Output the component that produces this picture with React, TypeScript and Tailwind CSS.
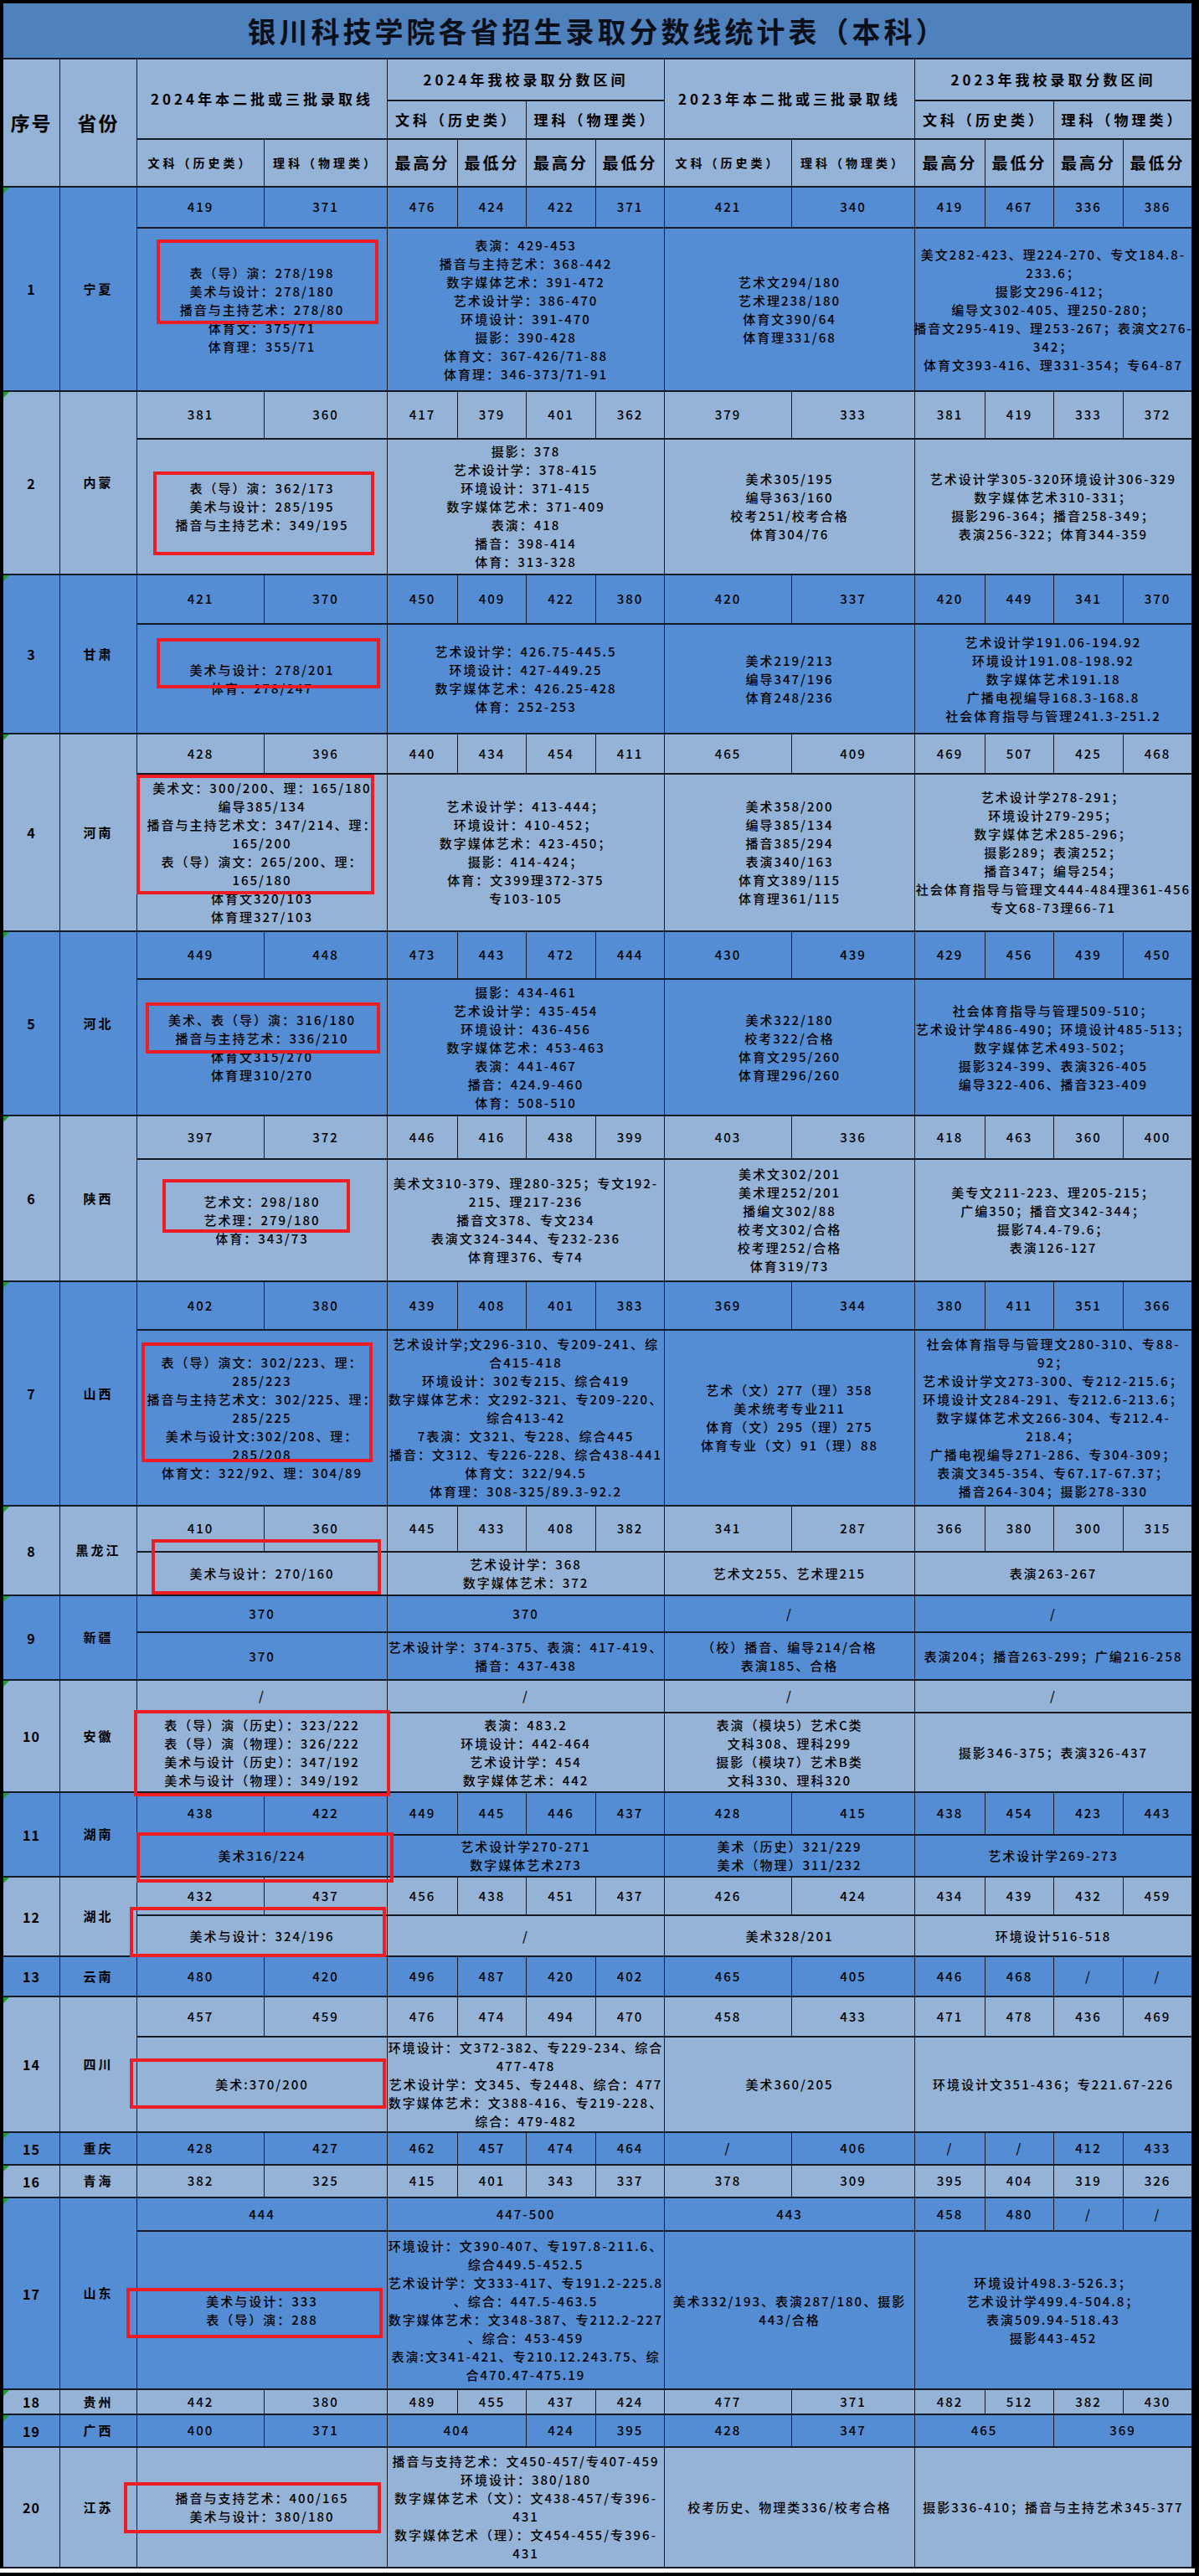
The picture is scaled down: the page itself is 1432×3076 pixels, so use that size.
import React from "react";

const COLS =
  "grid grid-cols-[67px_91px_151px_146px_83px_81px_82px_81px_151px_146px_83px_81px_82px_81px] gap-x-px gap-y-[2px]";

type Sc = string | [string, number];

interface Row {
  no: string;
  prov: string;
  dark: boolean;
  cls: string;
  scores?: Sc[];
  texts?: string[][];
  tri?: boolean;
}

const SPAN: Record<number, string> = { 1: "", 2: "col-span-2", 4: "col-span-4" };
const TSPAN = ["col-span-2", "col-span-4", "col-span-2", "col-span-4"];

const ROWS: Row[] = [
  {
    no: "1", prov: "宁夏", dark: true, tri: true, cls: "h-[242px] grid-rows-[47px_193px]",
    scores: ["419", "371", "476", "424", "422", "371", "421", "340", "419", "467", "336", "386"],
    texts: [
      ["表（导）演：278/198", "美术与设计：278/180", "播音与主持艺术：278/80", "体育文：375/71", "体育理：355/71"],
      ["表演：429-453", "播音与主持艺术：368-442", "数字媒体艺术：391-472", "艺术设计学：386-470", "环境设计：391-470", "摄影：390-428", "体育文：367-426/71-88", "体育理：346-373/71-91"],
      ["艺术文294/180", "艺术理238/180", "体育文390/64", "体育理331/68"],
      ["美文282-423、理224-270、专文184.8-", "233.6；", "摄影文296-412；", "编导文302-405、理250-280；", "播音文295-419、理253-267；表演文276-", "342；", "体育文393-416、理331-354；专64-87"],
    ],
  },
  {
    no: "2", prov: "内蒙", dark: false, tri: true, cls: "h-[217px] grid-rows-[55px_160px]",
    scores: ["381", "360", "417", "379", "401", "362", "379", "333", "381", "419", "333", "372"],
    texts: [
      ["表（导）演：362/173", "美术与设计：285/195", "播音与主持艺术：349/195"],
      ["摄影：378", "艺术设计学：378-415", "环境设计：371-415", "数字媒体艺术：371-409", "表演：418", "播音：398-414", "体育：313-328"],
      ["美术305/195", "编导363/160", "校考251/校考合格", "体育304/76"],
      ["艺术设计学305-320环境设计306-329", "数字媒体艺术310-331；", "摄影296-364；播音258-349；", "表演256-322；体育344-359"],
    ],
  },
  {
    no: "3", prov: "甘肃", dark: true, tri: true, cls: "h-[188px] grid-rows-[57px_129px]",
    scores: ["421", "370", "450", "409", "422", "380", "420", "337", "420", "449", "341", "370"],
    texts: [
      ["美术与设计：278/201", "体育：278/247"],
      ["艺术设计学：426.75-445.5", "环境设计：427-449.25", "数字媒体艺术：426.25-428", "体育：252-253"],
      ["美术219/213", "编导347/196", "体育248/236"],
      ["艺术设计学191.06-194.92", "环境设计191.08-198.92", "数字媒体艺术191.18", "广播电视编导168.3-168.8", "社会体育指导与管理241.3-251.2"],
    ],
  },
  {
    no: "4", prov: "河南", dark: false, tri: true, cls: "h-[234px] grid-rows-[46px_186px]",
    scores: ["428", "396", "440", "434", "454", "411", "465", "409", "469", "507", "425", "468"],
    texts: [
      ["美术文：300/200、理：165/180", "编导385/134", "播音与主持艺术文：347/214、理：", "165/200", "表（导）演文：265/200、理：", "165/180", "体育文320/103", "体育理327/103"],
      ["艺术设计学：413-444；", "环境设计：410-452；", "数字媒体艺术：423-450；", "摄影：414-424；", "体育：文399理372-375", "专103-105"],
      ["美术358/200", "编导385/134", "播音385/294", "表演340/163", "体育文389/115", "体育理361/115"],
      ["艺术设计学278-291；", "环境设计279-295；", "数字媒体艺术285-296；", "摄影289；表演252；", "播音347；编导254；", "社会体育指导与管理文444-484理361-456", "专文68-73理66-71"],
    ],
  },
  {
    no: "5", prov: "河北", dark: true, tri: true, cls: "h-[218px] grid-rows-[55px_161px]",
    scores: ["449", "448", "473", "443", "472", "444", "430", "439", "429", "456", "439", "450"],
    texts: [
      ["美术、表（导）演：316/180", "播音与主持艺术：336/210", "体育文315/270", "体育理310/270"],
      ["摄影：434-461", "艺术设计学：435-454", "环境设计：436-456", "数字媒体艺术：453-463", "表演：441-467", "播音：424.9-460", "体育：508-510"],
      ["美术322/180", "校考322/合格", "体育文295/260", "体育理296/260"],
      ["社会体育指导与管理509-510；", "艺术设计学486-490；环境设计485-513；", "数字媒体艺术493-502；", "摄影324-399、表演326-405", "编导322-406、播音323-409"],
    ],
  },
  {
    no: "6", prov: "陕西", dark: false, tri: true, cls: "h-[196px] grid-rows-[50px_144px]",
    scores: ["397", "372", "446", "416", "438", "399", "403", "336", "418", "463", "360", "400"],
    texts: [
      ["艺术文：298/180", "艺术理：279/180", "体育：343/73"],
      ["美术文310-379、理280-325；专文192-", "215、理217-236", "播音文378、专文234", "表演文324-344、专232-236", "体育理376、专74"],
      ["美术文302/201", "美术理252/201", "播编文302/88", "校考文302/合格", "校考理252/合格", "体育319/73"],
      ["美专文211-223、理205-215；", "广编350；播音文342-344；", "摄影74.4-79.6；", "表演126-127"],
    ],
  },
  {
    no: "7", prov: "山西", dark: true, tri: true, cls: "h-[266px] grid-rows-[56px_208px]",
    scores: ["402", "380", "439", "408", "401", "383", "369", "344", "380", "411", "351", "366"],
    texts: [
      ["表（导）演文：302/223、理：", "285/223", "播音与主持艺术文：302/225、理：", "285/225", "美术与设计文:302/208、理：", "285/208", "体育文：322/92、理：304/89"],
      ["艺术设计学;文296-310、专209-241、综", "合415-418", "环境设计：302专215、综合419", "数字媒体艺术：文292-321、专209-220、", "综合413-42", "7表演：文321、专228、综合445", "播音：文312、专226-228、综合438-441", "体育文：322/94.5", "体育理：308-325/89.3-92.2"],
      ["艺术（文）277（理）358", "美术统考专业211", "体育（文）295（理）275", "体育专业（文）91（理）88"],
      ["社会体育指导与管理文280-310、专88-", "92；", "艺术设计学文273-300、专212-215.6；", "环境设计文284-291、专212.6-213.6；", "数字媒体艺术文266-304、专212.4-", "218.4；", "广播电视编导271-286、专304-309；", "表演文345-354、专67.17-67.37；", "播音264-304；摄影278-330"],
    ],
  },
  {
    no: "8", prov: "黑龙江", dark: false, tri: true, cls: "h-[105px] grid-rows-[53px_50px]",
    scores: ["410", "360", "445", "433", "408", "382", "341", "287", "366", "380", "300", "315"],
    texts: [["美术与设计：270/160"], ["艺术设计学：368", "数字媒体艺术：372"], ["艺术文255、艺术理215"], ["表演263-267"]],
  },
  {
    no: "9", prov: "新疆", dark: true, tri: true, cls: "h-[99px] grid-rows-[42px_55px]",
    scores: [["370", 2], ["370", 4], ["/", 2], ["/", 4]],
    texts: [
      ["370"],
      ["艺术设计学：374-375、表演：417-419、", "播音：437-438"],
      ["（校）播音、编导214/合格", "表演185、合格"],
      ["表演204；播音263-299；广编216-258"],
    ],
  },
  {
    no: "10", prov: "安徽", dark: false, tri: true, cls: "h-[132px] grid-rows-[37px_93px]",
    scores: [["/", 2], ["/", 4], ["/", 2], ["/", 4]],
    texts: [
      ["表（导）演（历史）：323/222", "表（导）演（物理）：326/222", "美术与设计（历史）：347/192", "美术与设计（物理）：349/192"],
      ["表演：483.2", "环境设计：442-464", "艺术设计学：454", "数字媒体艺术：442"],
      ["表演（模块5）艺术C类", "文科308、理科299", "摄影（模块7）艺术B类", "文科330、理科320"],
      ["摄影346-375；表演326-437"],
    ],
  },
  {
    no: "11", prov: "湖南", dark: true, tri: true, cls: "h-[99px] grid-rows-[49px_48px]",
    scores: ["438", "422", "449", "445", "446", "437", "428", "415", "438", "454", "423", "443"],
    texts: [["美术316/224"], ["艺术设计学270-271", "数字媒体艺术273"], ["美术（历史）321/229", "美术（物理）311/232"], ["艺术设计学269-273"]],
  },
  {
    no: "12", prov: "湖北", dark: false, tri: true, cls: "h-[93px] grid-rows-[44px_47px]",
    scores: ["432", "437", "456", "438", "451", "437", "426", "424", "434", "439", "432", "459"],
    texts: [["美术与设计：324/196"], ["/"], ["美术328/201"], ["环境设计516-518"]],
  },
  {
    no: "13", prov: "云南", dark: true, cls: "h-[46px] grid-rows-[46px]",
    scores: ["480", "420", "496", "487", "420", "402", "465", "405", "446", "468", "/", "/"],
  },
  {
    no: "14", prov: "四川", dark: false, tri: true, cls: "h-[160px] grid-rows-[46px_112px]",
    scores: ["457", "459", "476", "474", "494", "470", "458", "433", "471", "478", "436", "469"],
    texts: [
      ["美术:370/200"],
      ["环境设计：文372-382、专229-234、综合", "477-478", "艺术设计学：文345、专2448、综合：477", "数字媒体艺术：文388-416、专219-228、", "综合：479-482"],
      ["美术360/205"],
      ["环境设计文351-436；专221.67-226"],
    ],
  },
  {
    no: "15", prov: "重庆", dark: true, tri: true, cls: "h-[37px] grid-rows-[37px]",
    scores: ["428", "427", "462", "457", "474", "464", "/", "406", "/", "/", "412", "433"],
  },
  {
    no: "16", prov: "青海", dark: false, tri: true, cls: "h-[37px] grid-rows-[37px]",
    scores: ["382", "325", "415", "401", "343", "337", "378", "309", "395", "404", "319", "326"],
  },
  {
    no: "17", prov: "山东", dark: true, tri: true, cls: "h-[227px] grid-rows-[38px_187px]",
    scores: [["444", 2], ["447-500", 4], ["443", 2], "458", "480", "/", "/"],
    texts: [
      ["美术与设计：333", "表（导）演：288"],
      ["环境设计：文390-407、专197.8-211.6、", "综合449.5-452.5", "艺术设计学：文333-417、专191.2-225.8", "、综合：447.5-463.5", "数字媒体艺术：文348-387、专212.2-227", "、综合：453-459", "表演:文341-421、专210.12.243.75、综", "合470.47-475.19"],
      ["美术332/193、表演287/180、摄影", "443/合格"],
      ["环境设计498.3-526.3；", "艺术设计学499.4-504.8；", "表演509.94-518.43", "摄影443-452"],
    ],
  },
  {
    no: "18", prov: "贵州", dark: false, tri: true, cls: "h-[28px] grid-rows-[28px]",
    scores: ["442", "380", "489", "455", "437", "424", "477", "371", "482", "512", "382", "430"],
  },
  {
    no: "19", prov: "广西", dark: true, tri: true, cls: "h-[37px] grid-rows-[37px]",
    scores: ["400", "371", ["404", 2], "424", "395", "428", "347", ["465", 2], ["369", 2]],
  },
  {
    no: "20", prov: "江苏", dark: false, cls: "h-[142px] grid-rows-[142px]",
    texts: [
      ["播音与支持艺术：400/165", "美术与设计：380/180"],
      ["播音与支持艺术：文450-457/专407-459", "环境设计：380/180", "数字媒体艺术（文）：文438-457/专396-", "431", "数字媒体艺术（理）：文454-455/专396-", "431"],
      ["校考历史、物理类336/校考合格"],
      ["摄影336-410；播音与主持艺术345-377"],
    ],
  },
];

const BOXES = [
  "left-[187px] top-[286px] w-[265px] h-[101px]",
  "left-[183px] top-[563px] w-[264px] h-[100px]",
  "left-[187px] top-[762px] w-[267px] h-[60px]",
  "left-[163px] top-[925px] w-[284px] h-[143px]",
  "left-[174px] top-[1197px] w-[280px] h-[61px]",
  "left-[194px] top-[1408px] w-[224px] h-[64px]",
  "left-[169px] top-[1603px] w-[276px] h-[143px]",
  "left-[181px] top-[1838px] w-[274px] h-[66px]",
  "left-[160px] top-[2042px] w-[306px] h-[103px]",
  "left-[163px] top-[2188px] w-[307px] h-[60px]",
  "left-[155px] top-[2277px] w-[306px] h-[60px]",
  "left-[155px] top-[2458px] w-[306px] h-[60px]",
  "left-[151px] top-[2732px] w-[306px] h-[60px]",
  "left-[148px] top-[2964px] w-[307px] h-[61px]",
];

function Tri() {
  return (
    <span className="absolute left-0 top-0 h-0 w-0 border-t-[7px] border-r-[7px] border-t-[#1f9a3a] border-r-transparent" />
  );
}

function DataRow({ r }: { r: Row }) {
  const bg = r.dark ? "bg-[#548dd4]" : "bg-[#95b3d7]";
  const two = !!(r.scores && r.texts);
  const span = two ? "row-span-2" : "";
  return (
    <div className={`${COLS} ${r.cls}`}>
      <div className={`${bg} ${span} relative flex items-center justify-center text-[16px] font-bold tracking-[1px]`}>
        {r.tri && <Tri />}
        {r.no}
      </div>
      <div className={`${bg} ${span} flex items-center justify-center text-[15px] font-bold tracking-[3px]`}>
        {r.prov}
      </div>
      {r.scores?.map((s, i) => {
        const [t, n] = typeof s === "string" ? [s, 1] : s;
        return (
          <div key={"s" + i} className={`${bg} ${SPAN[n]} flex items-center justify-center`}>
            {t}
          </div>
        );
      })}
      {r.texts?.map((lines, i) => (
        <div
          key={"t" + i}
          className={`${bg} ${TSPAN[i]} flex flex-col items-center justify-center leading-[22px]`}
        >
          {lines.map((l, j) => (
            <div key={j} className="whitespace-nowrap">
              {l}
            </div>
          ))}
        </div>
      ))}
    </div>
  );
}

function Header() {
  const h = "bg-[#95b3d7] flex items-center justify-center text-center font-bold";
  const g = `${h} text-[17px] tracking-[4px]`;
  const s = `${h} text-[14px] tracking-[4px]`;
  const m = `${h} text-[19px] tracking-[3px]`;
  return (
    <div className={`${COLS} h-[151px] grid-rows-[48px_44px_55px]`}>
      <div className={`${h} row-span-3 text-[23px] tracking-[2px]`}>序号</div>
      <div className={`${h} row-span-3 text-[23px] tracking-[2px]`}>省份</div>
      <div className={`${g} col-span-2 row-span-2`}>2024年本二批或三批录取线</div>
      <div className={`${g} col-span-4`}>2024年我校录取分数区间</div>
      <div className={`${g} col-span-2 row-span-2`}>2023年本二批或三批录取线</div>
      <div className={`${g} col-span-4`}>2023年我校录取分数区间</div>
      <div className={`${g} col-span-2`}>文科（历史类）</div>
      <div className={`${g} col-span-2`}>理科（物理类）</div>
      <div className={`${g} col-span-2`}>文科（历史类）</div>
      <div className={`${g} col-span-2`}>理科（物理类）</div>
      <div className={s}>文科（历史类）</div>
      <div className={s}>理科（物理类）</div>
      <div className={m}>最高分</div>
      <div className={m}>最低分</div>
      <div className={m}>最高分</div>
      <div className={m}>最低分</div>
      <div className={s}>文科（历史类）</div>
      <div className={s}>理科（物理类）</div>
      <div className={m}>最高分</div>
      <div className={m}>最低分</div>
      <div className={m}>最高分</div>
      <div className={m}>最低分</div>
    </div>
  );
}

export default function App() {
  return (
    <div className="relative w-[1432px] h-[3076px] overflow-hidden bg-black pt-[4px] pl-[4px] font-['Noto_Sans_CJK_SC',sans-serif] text-black">
      <div className="flex w-[1419px] flex-col gap-[2px] bg-[#141a26] pb-[2px] text-[15px] font-medium tracking-[2px]">
        <div className="flex h-[65px] items-center justify-center bg-[#4f81bd] text-[34px] font-bold tracking-[4px] text-[#0b0f1a]">
          银川科技学院各省招生录取分数线统计表（本科）
        </div>
        <Header />
        {ROWS.map((r) => (
          <DataRow key={r.no} r={r} />
        ))}
      </div>
      <div className="-ml-[4px] h-[5px] w-[1427px] bg-white" />
      {BOXES.map((b, i) => (
        <div key={i} className={`absolute border-4 border-[#ee1c24] ${b}`} />
      ))}
    </div>
  );
}
